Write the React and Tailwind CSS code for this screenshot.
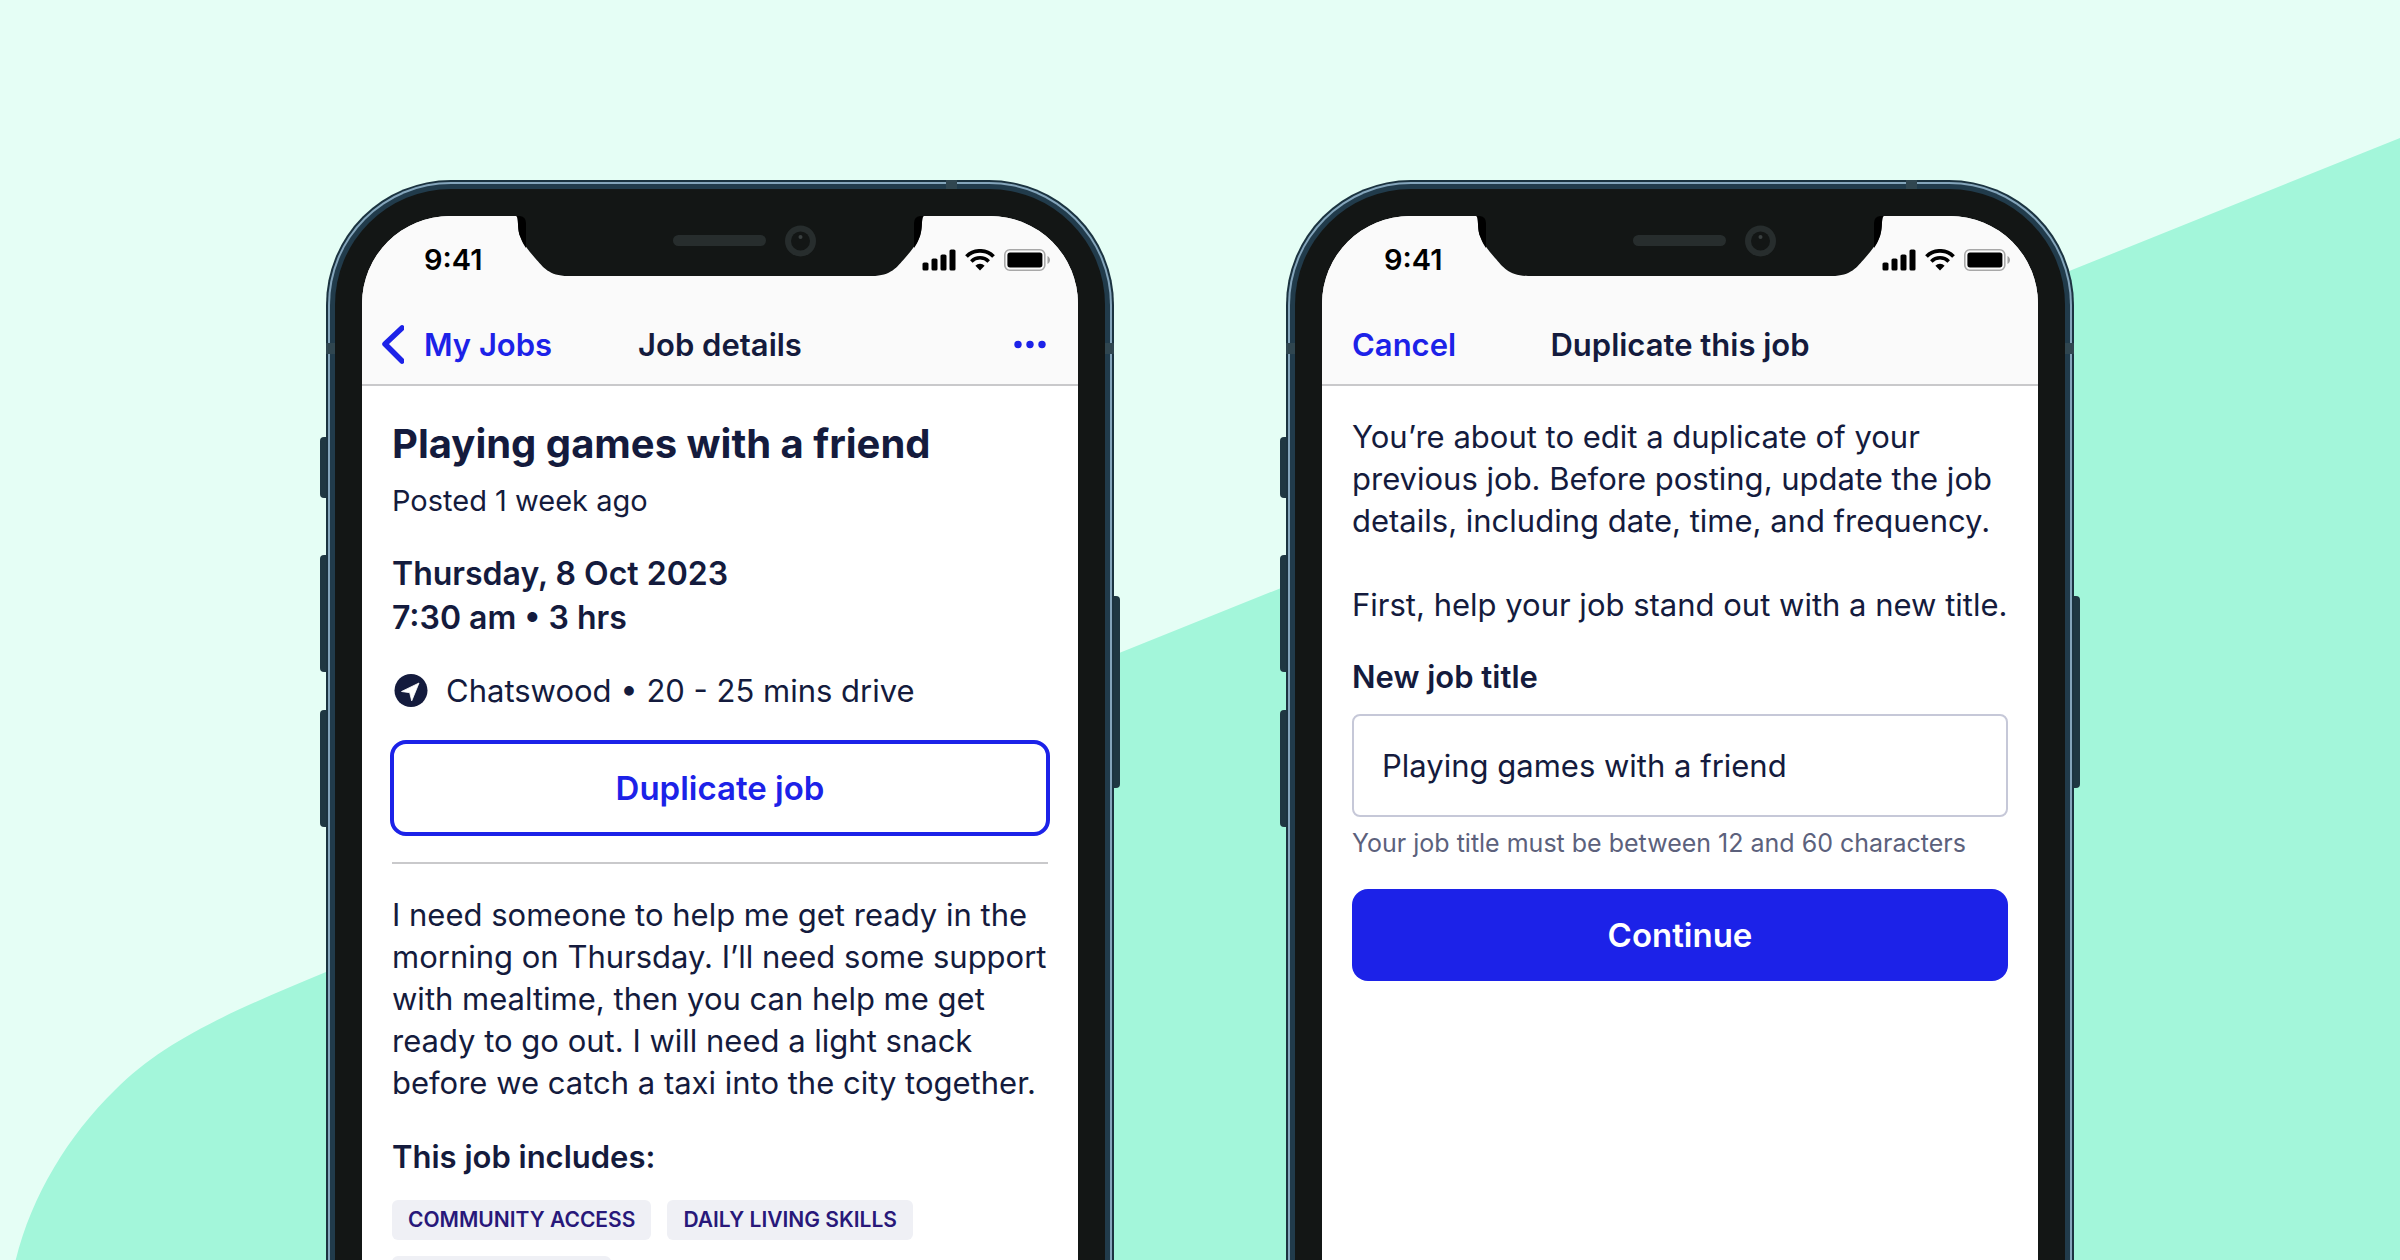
import React, { useState } from "react";

const BackIcon = () => (
  <svg className="h-10 w-6 shrink-0" viewBox="0 0 24 40" fill="none">
    <path
      d="M22 3 5 19l17 17"
      stroke="currentColor"
      strokeWidth="5.5"
      strokeLinecap="round"
      strokeLinejoin="round"
    />
  </svg>
);

const MoreIcon = () => (
  <svg className="h-8 w-8" viewBox="0 0 32 32" fill="currentColor">
    <circle cx="4" cy="15.5" r="3.7" />
    <circle cx="16" cy="15.5" r="3.7" />
    <circle cx="28" cy="15.5" r="3.7" />
  </svg>
);

const LocationIcon = () => (
  <svg className="h-9 w-9 shrink-0" viewBox="0 0 36 36">
    <circle cx="19" cy="17.5" r="16.5" fill="#141b3d" />
    <path
      d="M27 10 9.5 18.500l8.200 1.200 2 8.200z"
      fill="#fff"
      stroke="#fff"
      strokeWidth="0.8"
      strokeLinejoin="round"
    />
  </svg>
);

const SignalIcon = () => (
  <svg className="h-[22px] w-[34px]" viewBox="0 0 34 22" fill="#000">
    <rect x="0.5" y="13.5" width="6" height="8" rx="1.6" />
    <rect x="9.5" y="9.5" width="6" height="12" rx="1.6" />
    <rect x="18.5" y="5.5" width="6" height="16" rx="1.6" />
    <rect x="27.5" y="0.5" width="6" height="21" rx="1.6" />
  </svg>
);

const WifiIcon = () => (
  <svg className="h-[22px] w-[30px]" viewBox="0 0 30 22" fill="none">
    <path d="M1.5 7.5A19 19 0 0 1 28.5 7.5" stroke="#000" strokeWidth="3.8" />
    <path d="M6.3 12.4A12.3 12.3 0 0 1 23.7 12.4" stroke="#000" strokeWidth="3.5" />
    <path d="M15 21.6l-4.6-4.900a6.600 6.600 0 0 1 9.200 0z" fill="#000" />
  </svg>
);

const BatteryIcon = () => (
  <svg className="h-[22px] w-[46px]" viewBox="0 0 46 22" fill="none">
    <rect x="0.8" y="0.8" width="40" height="20.4" rx="5" stroke="#a8a8a8" strokeWidth="1.6" />
    <rect x="3.4" y="3.6" width="35" height="14.8" rx="2.6" fill="#000" />
    <path d="M43.5 7c3.300 1.500 3.300 6.500 0 8z" fill="#a0a0a0" />
  </svg>
);

const Notch = () => (
  <svg
    className="absolute top-0 left-1/2 h-[60px] w-[408px] -translate-x-1/2"
    viewBox="0 0 408 60"
  >
    <path
      d="M0 0C3 0 1 12 4 20 7 28 13 35 19 42 27 51 33 60 52 60H356C375 60 381 51 389 42 395 35 401 28 404 20 407 12 405 0 408 0z"
      fill="#131615"
    />
    <path d="M0 0C3 0 1 12 4 20 6 26 8 29 10 32V7Q10 1 4 0z" fill="#000" />
    <path d="M408 0C405 0 407 12 404 20 402 26 400 29 398 32V7Q398 1 404 0z" fill="#000" />
    <rect x="157" y="19" width="93" height="11" rx="5.5" fill="#272d2d" />
    <circle cx="284.5" cy="25" r="15.5" fill="#272d2d" />
    <circle cx="284.5" cy="25" r="9.5" fill="#131615" />
    <circle cx="284.5" cy="21" r="2" fill="#3a4040" />
  </svg>
);

const Phone = ({ nav, children }) => (
  <section className="relative w-1/3 px-1.5">
    {/* side buttons */}
    <span className="absolute top-[257px] left-0 h-[61px] w-3 rounded-l-sm bg-[#1f3742]" />
    <span className="absolute top-[375px] left-0 h-[117px] w-3 rounded-l-sm bg-[#1f3742]" />
    <span className="absolute top-[530px] left-0 h-[117px] w-3 rounded-l-sm bg-[#1f3742]" />
    <span className="absolute top-[416px] right-0 h-[192px] w-3 rounded-r-sm bg-[#1f3742]" />

    <div className="relative h-full rounded-t-[125px] bg-[#1b3340] p-0.5 pb-0">
      <div className="h-full rounded-t-[123px] bg-[#84a5bb] p-0.5 pb-0">
        <div className="h-full rounded-t-[121px] bg-[#213b4b] p-[5px] pb-0">
          <div className="h-full rounded-t-[116px] bg-[#131615] px-[27px] pt-[27px]">
            <div className="relative h-full overflow-hidden rounded-t-[88px] bg-white">
              <header className="flex h-[170px] flex-col border-b-2 border-[#c9c9cb] bg-[#fafafa]">
                <div className="flex h-[88px] items-center justify-between pr-7 pl-[62px]">
                  <span className="text-[29px] font-semibold text-black">9:41</span>
                  <div className="flex items-center gap-[9px]">
                    <SignalIcon />
                    <WifiIcon />
                    <BatteryIcon />
                  </div>
                </div>
                {nav}
              </header>
              {children}
            </div>
          </div>
        </div>
      </div>
      {/* antenna bands */}
      <span className="absolute top-0 right-[157px] h-[9px] w-[11px] bg-[#304650]" />
      <span className="absolute top-[163px] left-0 h-[11px] w-[9px] bg-[#304650]" />
      <span className="absolute top-[163px] right-0 h-[11px] w-[9px] bg-[#304650]" />
    </div>
    <div className="absolute inset-x-0 top-9">
      <Notch />
    </div>
  </section>
);

const JobDetails = () => (
  <Phone
    nav={
      <nav className="grid h-20 grid-cols-[1fr_auto_1fr] items-center px-[18px] pt-0.5 text-[31px] font-semibold">
        <a href="#jobs" className="flex items-center gap-5 text-[#1c22e8]">
          <BackIcon />
          <span>My Jobs</span>
        </a>
        <h2 className="text-[#141b3d]">Job details</h2>
        <button aria-label="More" className="mr-3.5 justify-self-end text-[#1c22e8]">
          <MoreIcon />
        </button>
      </nav>
    }
  >
    <main className="px-[30px] pt-[30px] text-[31px] leading-[42px]">
      <h1 className="text-[40px] leading-[56px] font-bold">Playing games with a friend</h1>
      <p className="mt-2 text-[29px]">Posted 1 week ago</p>
      <p className="mt-[30px] text-[32px] leading-[44px] font-semibold">
        Thursday, 8 Oct 2023
        <br />
        7:30 am • 3 hrs
      </p>
      <div className="mt-[30px] flex items-center gap-[18px]">
        <LocationIcon />
        <span>Chatswood • 20 - 25 mins drive</span>
      </div>
      <div className="-mx-0.5 mt-7">
        <button className="h-24 w-full rounded-2xl border-4 border-[#1c22e8] text-[33px] font-semibold text-[#1c22e8]">
          Duplicate job
        </button>
      </div>
      <hr className="mt-[26px] border-t-2 border-[#c9c9cb]" />
      <p className="mt-[30px]">
        I need someone to help me get ready in the morning on Thursday. I’ll need some support with
        mealtime, then you can help me get ready to go out. I will need a light snack before we catch
        a taxi into the city together.
      </p>
      <h3 className="mt-8 font-semibold">This job includes:</h3>
      <ul className="mt-[22px] flex flex-wrap gap-4 text-[21px] leading-10 font-semibold text-[#28187a]">
        <li className="h-10 rounded-md bg-[#eff0f5] px-4">COMMUNITY ACCESS</li>
        <li className="h-10 rounded-md bg-[#eff0f5] px-4">DAILY LIVING SKILLS</li>
        <li className="h-10 w-1/3 rounded-md bg-[#eff0f5] px-4" />
      </ul>
    </main>
  </Phone>
);

const DuplicateJob = () => {
  const [title, setTitle] = useState("Playing games with a friend");

  return (
    <Phone
      nav={
        <nav className="grid h-20 grid-cols-[1fr_auto_1fr] items-center px-[30px] pt-0.5 text-[31px] font-semibold">
          <a href="#jobs" className="text-[#1c22e8]">
            Cancel
          </a>
          <h2 className="text-[#141b3d]">Duplicate this job</h2>
        </nav>
      }
    >
      <main className="px-[30px] pt-[30px] text-[31px] leading-[42px]">
        <p>
          You’re about to edit a duplicate of your previous job. Before posting, update the job
          details, including date, time, and frequency.
        </p>
        <p className="mt-[42px]">First, help your job stand out with a new title.</p>
        <form className="mt-[30px] flex flex-col" onSubmit={(e) => e.preventDefault()}>
          <label htmlFor="title" className="font-semibold">
            New job title
          </label>
          <input
            id="title"
            type="text"
            className="mt-4 h-[103px] rounded-lg border-2 border-[#c6c8d8] bg-white px-7"
            value={title}
            onChange={(e) => setTitle(e.target.value)}
          />
          <p className="mt-2 text-[25px] leading-9 text-[#5c617c]">
            Your job title must be between 12 and 60 characters
          </p>
          <button className="mt-7 h-[92px] rounded-2xl bg-[#1c22e8] text-[33px] font-semibold text-white">
            Continue
          </button>
        </form>
      </main>
    </Phone>
  );
};

export default function App() {
  return (
    <div className="relative h-screen overflow-hidden bg-[#e5fef5] font-['Inter',sans-serif] text-[#141b3d]">
      <svg
        className="absolute inset-0 h-full w-full"
        viewBox="0 0 2400 1260"
        preserveAspectRatio="none"
      >
        <path
          d="M2400 138 326 972C230 1012 165 1040 115 1090 68 1136 32 1195 15.7 1260H2400z"
          fill="#a3f6da"
        />
      </svg>
      <div className="relative flex h-full justify-center gap-40 pt-[180px]">
        <JobDetails />
        <DuplicateJob />
      </div>
    </div>
  );
}
